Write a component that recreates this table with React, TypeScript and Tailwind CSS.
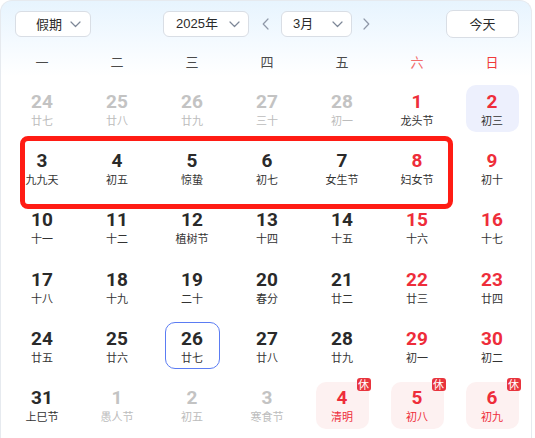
import React from "react";

type Cell = {
  d: number;
  l: string;
  kind?: "gray" | "red" | "dark";
  sel?: boolean;
  today?: boolean;
  hol?: boolean;
};

const rows: Cell[][] = [
  [
    { d: 24, l: "廿七", kind: "gray" },
    { d: 25, l: "廿八", kind: "gray" },
    { d: 26, l: "廿九", kind: "gray" },
    { d: 27, l: "三十", kind: "gray" },
    { d: 28, l: "初一", kind: "gray" },
    { d: 1, l: "龙头节", kind: "red" },
    { d: 2, l: "初三", kind: "red", sel: true },
  ],
  [
    { d: 3, l: "九九天" },
    { d: 4, l: "初五" },
    { d: 5, l: "惊蛰" },
    { d: 6, l: "初七" },
    { d: 7, l: "女生节" },
    { d: 8, l: "妇女节", kind: "red" },
    { d: 9, l: "初十", kind: "red" },
  ],
  [
    { d: 10, l: "十一" },
    { d: 11, l: "十二" },
    { d: 12, l: "植树节" },
    { d: 13, l: "十四" },
    { d: 14, l: "十五" },
    { d: 15, l: "十六", kind: "red" },
    { d: 16, l: "十七", kind: "red" },
  ],
  [
    { d: 17, l: "十八" },
    { d: 18, l: "十九" },
    { d: 19, l: "二十" },
    { d: 20, l: "春分" },
    { d: 21, l: "廿二" },
    { d: 22, l: "廿三", kind: "red" },
    { d: 23, l: "廿四", kind: "red" },
  ],
  [
    { d: 24, l: "廿五" },
    { d: 25, l: "廿六" },
    { d: 26, l: "廿七", today: true },
    { d: 27, l: "廿八" },
    { d: 28, l: "廿九" },
    { d: 29, l: "初一", kind: "red" },
    { d: 30, l: "初二", kind: "red" },
  ],
  [
    { d: 31, l: "上巳节" },
    { d: 1, l: "愚人节", kind: "gray" },
    { d: 2, l: "初五", kind: "gray" },
    { d: 3, l: "寒食节", kind: "gray" },
    { d: 4, l: "清明", hol: true },
    { d: 5, l: "初八", hol: true },
    { d: 6, l: "初九", hol: true },
  ],
];

const weekdays = ["一", "二", "三", "四", "五", "六", "日"];

const Chevron = ({ dir = "down" }: { dir?: "down" | "left" | "right" }) => {
  if (dir === "down")
    return (
      <svg width="11" height="7" viewBox="0 0 11 7" fill="none">
        <path d="M1 1l4.5 4.5L10 1" stroke="#7d8797" strokeWidth="1.2" strokeLinecap="round" strokeLinejoin="round" />
      </svg>
    );
  return (
    <svg width="7" height="12" viewBox="0 0 7 12" fill="none">
      <path
        d={dir === "left" ? "M6 1L1.2 6L6 11" : "M1 1l4.8 5L1 11"}
        stroke="#8f98a8"
        strokeWidth="1.2"
        strokeLinecap="round"
        strokeLinejoin="round"
      />
    </svg>
  );
};

function DayCell({ c }: { c: Cell }) {
  let num = "text-[#2a2a2a]";
  let lun = "text-[#333333]";
  if (c.kind === "gray") {
    num = "text-[#c3c3c3]";
    lun = "text-[#bcbcbc]";
  } else if (c.kind === "red") {
    num = "text-[#ee2d3a]";
  }
  if (c.hol) {
    num = "text-[#ee2d3a]";
    lun = "text-[#ee2d3a]";
  }
  let box = "";
  if (c.sel) box = "bg-[#edf0fd]";
  if (c.today) box = "border border-[#5b7cf3]";
  if (c.hol) box = "bg-[#fdf1f1]";
  return (
    <div className="flex h-[59.3px] items-center justify-center">
      <div
        className={`relative flex h-[47px] flex-col items-center justify-center rounded-[10px] pt-[2px] ${
          c.today ? "w-[55px]" : "w-[53px]"
        } ${box}`}
      >
        <div className={`font-['Roboto',sans-serif] text-[19px] font-bold leading-[20px] ${num}`}>{c.d}</div>
        <div className={`mt-[1px] whitespace-nowrap font-['Noto_Sans_CJK_SC',sans-serif] text-[11px] leading-[15px] ${lun}`}>
          {c.l}
        </div>
        {c.hol && (
          <div className="absolute right-[-2px] top-[-4px] flex h-[13px] w-[14px] items-center justify-center rounded-[3px] bg-[#e8343d] font-['Noto_Sans_CJK_SC',sans-serif] text-[11px] leading-none text-white">
            休
          </div>
        )}
      </div>
    </div>
  );
}

export default function App() {
  return (
    <div className="h-[438px] w-[535px] overflow-hidden bg-white font-['Noto_Sans_CJK_SC',sans-serif]">
      <div className="relative h-[460px] w-[532px] rounded-t-[12px] border border-b-0 border-[#e6eaef] bg-[linear-gradient(180deg,#e7f4fe_0px,#f4faff_40px,#ffffff_75px)] pt-[9px]">
        {/* header */}
        <div className="flex h-[28px] items-center pl-[14px] pr-[12px]">
          <div className="flex h-[26px] w-[76px] items-center justify-between rounded-[6px] border border-[#d9dee5] bg-white pl-[20px] pr-[9px] text-[13px] text-[#2a2a2a]">
            <span>假期</span>
            <Chevron />
          </div>
          <div className="ml-[72px] flex items-center">
            <div className="flex h-[26px] w-[86px] items-center justify-between rounded-[6px] border border-[#d9dee5] bg-white pl-[12px] pr-[8px] text-[13px] text-[#2a2a2a]">
              <span className="font-['Liberation_Sans','Noto_Sans_CJK_SC',sans-serif]">2025年</span>
              <Chevron />
            </div>
            <div className="mx-[12px] flex w-[8px] justify-center">
              <Chevron dir="left" />
            </div>
            <div className="flex h-[26px] w-[71px] items-center justify-between rounded-[6px] border border-[#d9dee5] bg-white pl-[11px] pr-[8px] text-[13px] text-[#2a2a2a]">
              <span className="font-['Liberation_Sans','Noto_Sans_CJK_SC',sans-serif]">3月</span>
              <Chevron />
            </div>
            <div className="ml-[10px] flex w-[8px] justify-center">
              <Chevron dir="right" />
            </div>
          </div>
          <div className="ml-auto flex h-[28px] w-[73px] items-center justify-center rounded-[7px] border border-[#d9dee5] bg-white text-[13px] text-[#2a2a2a]">
            今天
          </div>
        </div>

        {/* weekdays */}
        <div className="mt-[10px] grid h-[28px] grid-cols-7 pl-[3.5px] pr-[1.5px]">
          {weekdays.map((w, i) => (
            <div
              key={w}
              className={`flex items-center justify-center text-[13px] ${
                i === 5 ? "text-[#f26d6d]" : i === 6 ? "text-[#f03a3a]" : "text-[#4a4a4a]"
              }`}
            >
              {w}
            </div>
          ))}
        </div>

        {/* days */}
        <div className="mt-[3px] grid grid-cols-7 pl-[3.5px] pr-[1.5px]">
          {rows.flat().map((c, i) => (
            <DayCell key={i} c={c} />
          ))}
        </div>

        {/* annotation */}
        <div className="absolute left-[18.5px] top-[135px] h-[73px] w-[433px] rounded-[8px] border-[5px] border-[#ff1c14]" />
      </div>
    </div>
  );
}
